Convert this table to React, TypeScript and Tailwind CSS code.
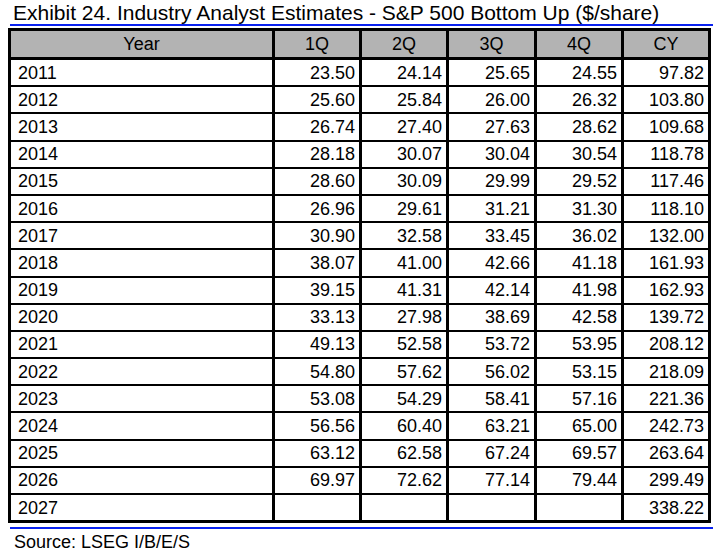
const rows: [string, string, string, string, string, string][] = [
  ["2011", "23.50", "24.14", "25.65", "24.55", "97.82"],
  ["2012", "25.60", "25.84", "26.00", "26.32", "103.80"],
  ["2013", "26.74", "27.40", "27.63", "28.62", "109.68"],
  ["2014", "28.18", "30.07", "30.04", "30.54", "118.78"],
  ["2015", "28.60", "30.09", "29.99", "29.52", "117.46"],
  ["2016", "26.96", "29.61", "31.21", "31.30", "118.10"],
  ["2017", "30.90", "32.58", "33.45", "36.02", "132.00"],
  ["2018", "38.07", "41.00", "42.66", "41.18", "161.93"],
  ["2019", "39.15", "41.31", "42.14", "41.98", "162.93"],
  ["2020", "33.13", "27.98", "38.69", "42.58", "139.72"],
  ["2021", "49.13", "52.58", "53.72", "53.95", "208.12"],
  ["2022", "54.80", "57.62", "56.02", "53.15", "218.09"],
  ["2023", "53.08", "54.29", "58.41", "57.16", "221.36"],
  ["2024", "56.56", "60.40", "63.21", "65.00", "242.73"],
  ["2025", "63.12", "62.58", "67.24", "69.57", "263.64"],
  ["2026", "69.97", "72.62", "77.14", "79.44", "299.49"],
  ["2027", "", "", "", "", "338.22"],
];

const headers = ["Year", "1Q", "2Q", "3Q", "4Q", "CY"];

const cols = "grid grid-cols-[261px_84px_84px_85px_84px_84px] gap-x-[3px]";

export default function App() {
  return (
    <div className="w-[713px] h-[555px] bg-white overflow-hidden text-black font-['Liberation_Sans',Arial,sans-serif]">
      <div className="h-[24px] pt-[1px] pl-[13px] text-[21px] leading-[23px] whitespace-nowrap">
        Exhibit 24. Industry Analyst Estimates - S&amp;P 500 Bottom Up ($/share)
      </div>
      <div className="ml-[10px] h-[2px] bg-[#0a22f0]" />

      <div className="mt-[2px] ml-[8px] w-[703px] bg-black p-[3px] text-[18px] leading-none">
        <div className={cols}>
          {headers.map((h) => (
            <div key={h} className="h-[26px] bg-[#b3b3b3] flex items-center justify-center">
              {h}
            </div>
          ))}
        </div>
        <div className={`${cols} mt-[3px] gap-y-[2px] auto-rows-[25.2px]`}>
          {rows.map((r) =>
            r.map((v, i) => (
              <div
                key={r[0] + i}
                className={`bg-white flex items-center ${i === 0 ? "pl-[7px]" : "justify-end pr-[4px]"}`}
              >
                {v}
              </div>
            ))
          )}
        </div>
      </div>

      <div className="mt-[4px] ml-[10px] h-[2px] bg-[#0a22f0]" />
      <div className="mt-[3px] pl-[14px] text-[18px] leading-[20px]">Source: LSEG I/B/E/S</div>
    </div>
  );
}
